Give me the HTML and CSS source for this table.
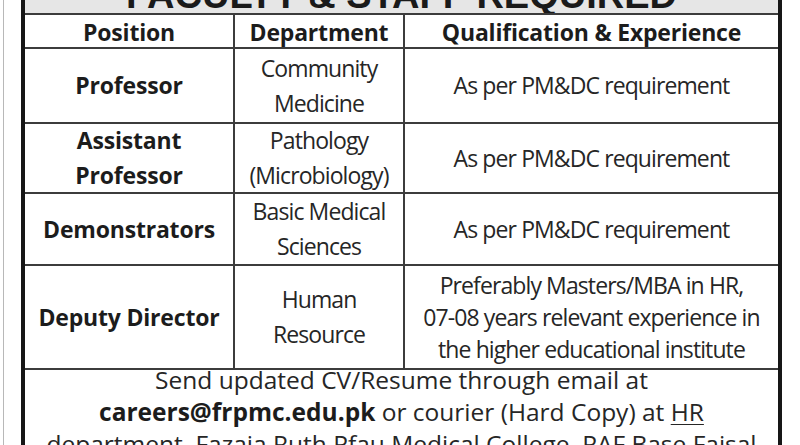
FILE: index.html
```html
<!DOCTYPE html>
<html lang="en">
<head>
<meta charset="utf-8">
<title>Faculty &amp; Staff Required</title>
<link rel="stylesheet" href="styles.css">
</head>
<body>
<div class="sheet">
  <div class="ad">
    <div class="title"><span>FACULTY &amp; STAFF REQUIRED</span></div>
    <div class="table">
      <div class="cell head">Position</div>
      <div class="cell head">Department</div>
      <div class="cell head last">Qualification &amp; Experience</div>

      <div class="cell pos">Professor</div>
      <div class="cell">Community<br>Medicine</div>
      <div class="cell last">As per PM&amp;DC requirement</div>

      <div class="cell pos">Assistant<br>Professor</div>
      <div class="cell">Pathology<br>(Microbiology)</div>
      <div class="cell last">As per PM&amp;DC requirement</div>

      <div class="cell pos">Demonstrators</div>
      <div class="cell">Basic Medical<br>Sciences</div>
      <div class="cell last">As per PM&amp;DC requirement</div>

      <div class="cell pos">Deputy Director</div>
      <div class="cell">Human<br>Resource</div>
      <div class="cell last tight">Preferably Masters/MBA in HR,<br>07-08 years relevant experience in<br>the higher educational institute</div>
    </div>
    <p class="footer">Send updated CV/Resume through email at<br><b>careers@frpmc.edu.pk</b> or courier (Hard Copy) at <u>HR</u><br>department, Fazaia Ruth Pfau Medical College, PAF Base Faisal</p>
  </div>
</div>
</body>
</html>
```

FILE: styles.css
```css
html, body {
  margin: 0;
  padding: 0;
  background: #ffffff;
}

body {
  width: 800px;
  height: 445px;
  overflow: hidden;
}

.sheet {
  margin-left: 3px;
  height: 445px;
  border-left: 1px solid #b8b8b8;
  padding-left: 17px;
}

.ad {
  width: 753px;
  height: 445px;
  border-left: 4px solid #161616;
  border-right: 4px solid #161616;
  overflow: hidden;
}

.title {
  height: 13px;
  background: #e6e6e6;
  border-bottom: 2px solid #3c3c3c;
  overflow: hidden;
  display: flex;
  justify-content: center;
  align-items: flex-end;
}

.title span {
  font-family: "Liberation Sans", Arial, sans-serif;
  font-weight: 700;
  font-size: 38px;
  line-height: 30px;
  margin-bottom: 3px;
  color: #1a1a1a;
  white-space: nowrap;
}

.table {
  display: grid;
  grid-template-columns: 210px 170px 1fr;
  grid-template-rows: 34px 75px 70px 72px 104px;
  font-family: "Open Sans", "Noto Sans", sans-serif;
  color: #262626;
}

.cell {
  display: flex;
  align-items: center;
  justify-content: center;
  text-align: center;
  border-right: 2px solid #3c3c3c;
  border-bottom: 2px solid #3c3c3c;
  font-size: 23px;
  font-weight: 500;
  line-height: 35px;
  letter-spacing: -0.9px;
}

.cell.last {
  border-right: none;
}

.cell.head,
.cell.pos {
  font-weight: 700;
  color: #1c1c1c;
  letter-spacing: -0.2px;
}

.cell.head {
  padding-top: 3px;
}

.cell.tight {
  line-height: 32px;
}

.footer {
  margin: -6px 0 0;
  font-family: "Open Sans", "Noto Sans", sans-serif;
  font-size: 24.5px;
  line-height: 32px;
  text-align: center;
  color: #262626;
  white-space: nowrap;
}

.footer b {
  font-weight: 700;
  color: #1c1c1c;
}

.footer u {
  text-decoration-thickness: 1px;
  text-underline-offset: 3px;
}
```
